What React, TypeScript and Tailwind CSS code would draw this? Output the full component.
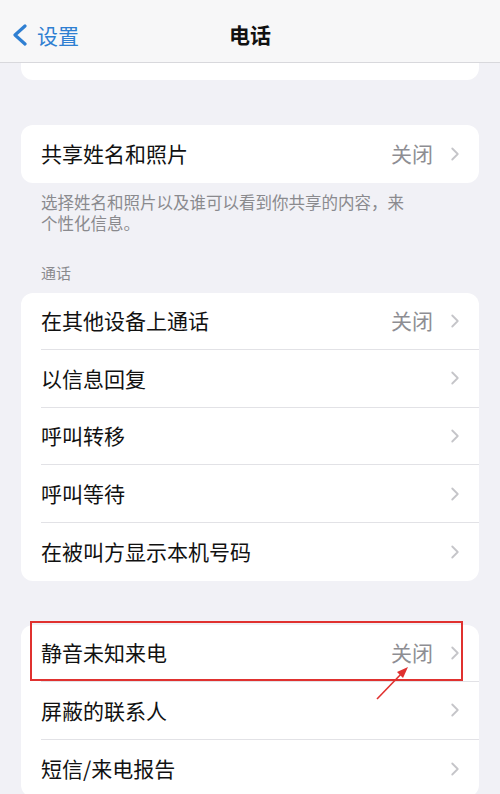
import { ChevronRight } from 'lucide-react'

const FONT = { fontFamily: '"Noto Sans CJK SC", "Noto Sans", sans-serif' }

function Row({ label, value, last }: { label: string; value?: string; last?: boolean }) {
  return (
    <div className="flex h-[57.6px] items-center pl-5">
      <div className={`flex h-full flex-1 items-center pr-[13px] ${last ? '' : 'border-b border-[#e2e2e6]'}`}>
        <span className="flex-1 text-[21px] text-[#111]">{label}</span>
        {value && <span className="mr-[11px] text-[21px] text-[#8e8e93]">{value}</span>}
        <ChevronRight className="h-[22px] w-[22px] text-[#c5c5c9]" strokeWidth={2} />
      </div>
    </div>
  )
}

export default function App() {
  return (
    <div style={FONT} className="relative h-[794px] w-[500px] overflow-hidden bg-[#f1f1f6]">
      <div className="relative flex h-[63px] items-center justify-center border-b border-[#d8d8dc] bg-[#f7f7f8] pt-[8px]">
        <div className="absolute left-[11px] top-[24px] flex items-center text-[#2f7fd2]">
          <svg width="18" height="22" viewBox="0 0 18 22">
            <polyline points="14,2 4,11 14,20" fill="none" stroke="currentColor" strokeWidth="3.2" strokeLinecap="round" strokeLinejoin="round" />
          </svg>
          <span className="ml-[8px] text-[21px] leading-[22px]">设置</span>
        </div>
        <span className="text-[21px] font-bold text-[#111]">电话</span>
      </div>

      <div className="mx-[21px] h-[17px] rounded-b-[12px] bg-white" />

      <div className="mx-[21px] mt-[45px] overflow-hidden rounded-[12px] bg-white">
        <Row label="共享姓名和照片" value="关闭" last />
      </div>
      <div className="mt-[9px] px-[41px] text-[16.5px] text-[#8a8a8e]">
        <div className="leading-[21.5px]">选择姓名和照片以及谁可以看到你共享的内容，来</div>
        <div className="leading-[21.5px]">个性化信息。</div>
      </div>

      <p className="mt-[28px] px-[41px] text-[15px] leading-[20px] text-[#8a8a8e]">通话</p>

      <div className="mx-[21px] mt-[10px] overflow-hidden rounded-[12px] bg-white">
        <Row label="在其他设备上通话" value="关闭" />
        <Row label="以信息回复" />
        <Row label="呼叫转移" />
        <Row label="呼叫等待" />
        <Row label="在被叫方显示本机号码" last />
      </div>

      <div className="mx-[21px] mt-[44px] overflow-hidden rounded-[12px] bg-white">
        <Row label="静音未知来电" value="关闭" />
        <Row label="屏蔽的联系人" />
        <Row label="短信/来电报告" last />
      </div>

      <div className="absolute left-[30px] top-[621px] h-[60px] w-[433px] border-2 border-[#e0312f]" />
      <svg className="absolute left-0 top-0" width="500" height="794" viewBox="0 0 500 794">
        <line x1="377" y1="699" x2="404" y2="671" stroke="#e0312f" strokeWidth="1.6" />
        <polygon points="408,667 397,672 403,678" fill="#e0312f" />
      </svg>
    </div>
  )
}
